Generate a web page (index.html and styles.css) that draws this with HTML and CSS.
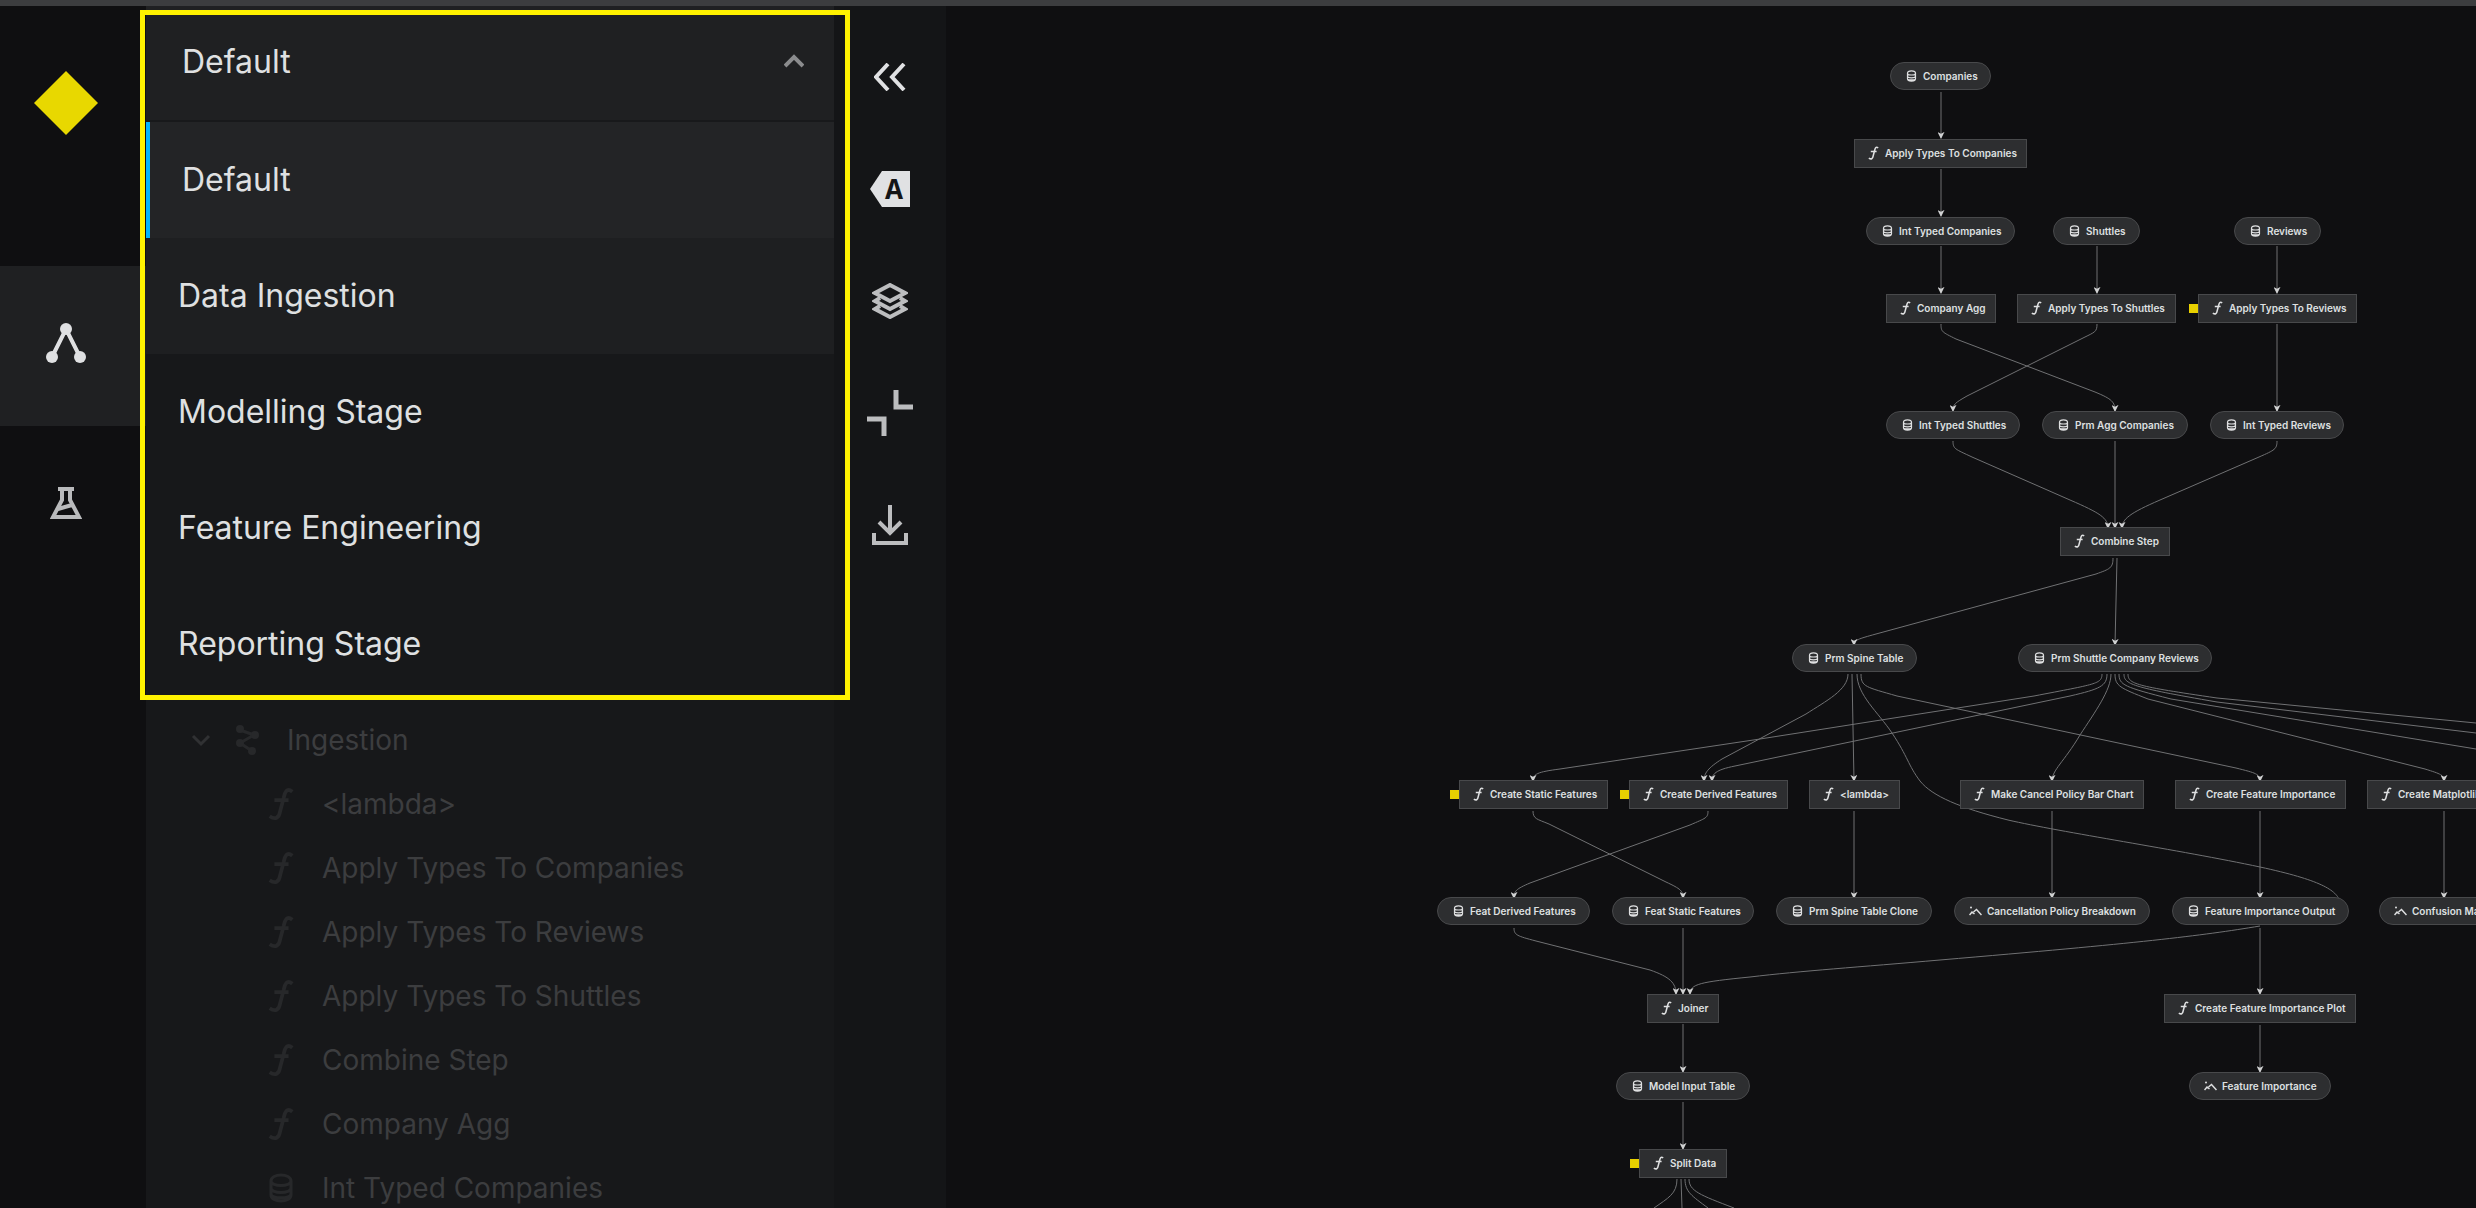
FILE: index.html
```html
<!DOCTYPE html>
<html lang="en">
<head>
<meta charset="utf-8">
<title>Pipeline</title>
<link rel="stylesheet" href="styles.css">
</head>
<body>
<svg class="sprite" aria-hidden="true">
  <symbol id="fn" viewBox="0 0 28 36"><path d="M26 5C20 0 18 6 17 11L13 26C12 33 8 35 2 31M7 14H22" fill="none" stroke="currentColor" stroke-width="4"/></symbol>
  <symbol id="db" viewBox="0 0 24 30"><path d="M2 8C2 0 22 0 22 8V22C22 30 2 30 2 22ZM2 8C2 14 22 14 22 8M2 15C2 21 22 21 22 15M2 21C2 26 22 26 22 21" fill="none" stroke="currentColor" stroke-width="3"/></symbol>
  <symbol id="plot" viewBox="0 0 26 20"><path d="M1 18L6 12L11 16M9 12L15 7L25 18" fill="none" stroke="currentColor" stroke-width="3"/><circle cx="4" cy="3" r="2" fill="currentColor"/></symbol>
</svg>
<div class="topbar"></div>
<div class="app">
  <nav class="nav" aria-label="Primary">
    <a class="nav-logo" href="#" aria-label="Home"><svg width="64" height="64" viewBox="0 0 64 64"><path d="M32 0L64 32L32 64L0 32Z" fill="#e8d800"/></svg></a>
    <a class="nav-item nav-item--active" href="#" aria-label="Flowchart"><svg width="44" height="44" viewBox="0 0 44 44"><path d="M8 36L22 8L36 36" fill="none" stroke="currentColor" stroke-width="4"/><circle cx="22" cy="8" r="6" fill="currentColor"/><circle cx="8" cy="36" r="6" fill="currentColor"/><circle cx="36" cy="36" r="6" fill="currentColor"/></svg></a>
    <a class="nav-item" href="#" aria-label="Experiments"><svg width="32" height="32" viewBox="0 0 32 32"><path d="M8 2H24M12 3V13L3 30H29L20 13V3M8 22L22 18" fill="none" stroke="currentColor" stroke-width="4"/></svg></a>
  </nav>
  <aside class="panel">
    <div class="panel-main">
      <button class="picker" type="button" aria-expanded="true">Default<svg width="20" height="14" viewBox="0 0 20 14"><path d="M1 12L10 3L19 12" fill="none" stroke="currentColor" stroke-width="4"/></svg></button>
      <ul class="options">
        <li><button class="option option--selected" type="button">Default</button></li>
        <li><button class="option option--hover" type="button">Data Ingestion</button></li>
        <li><button class="option" type="button">Modelling Stage</button></li>
        <li><button class="option" type="button">Feature Engineering</button></li>
        <li><button class="option" type="button">Reporting Stage</button></li>
      </ul>
      <ul class="tree">
        <li class="tree-row tree-row--group"><svg class="tree-caret" width="20" height="14" viewBox="0 0 20 14"><path d="M2 3L10 11L18 3" fill="none" stroke="currentColor" stroke-width="3"/></svg><svg class="tree-icon" width="24" height="30" viewBox="0 0 24 30"><path d="M5 5L19 10L5 18L17 26" fill="none" stroke="currentColor" stroke-width="3"/><circle cx="5" cy="4" r="4" fill="currentColor"/><circle cx="20" cy="10" r="4" fill="currentColor"/><circle cx="5" cy="18" r="4" fill="currentColor"/><circle cx="17" cy="26" r="4" fill="currentColor"/></svg>Ingestion</li>
        <li class="tree-row"><svg class="tree-icon"><use href="#fn"/></svg>&lt;lambda&gt;</li>
        <li class="tree-row"><svg class="tree-icon"><use href="#fn"/></svg>Apply Types To Companies</li>
        <li class="tree-row"><svg class="tree-icon"><use href="#fn"/></svg>Apply Types To Reviews</li>
        <li class="tree-row"><svg class="tree-icon"><use href="#fn"/></svg>Apply Types To Shuttles</li>
        <li class="tree-row"><svg class="tree-icon"><use href="#fn"/></svg>Combine Step</li>
        <li class="tree-row"><svg class="tree-icon"><use href="#fn"/></svg>Company Agg</li>
        <li class="tree-row"><svg class="tree-icon tree-icon--db"><use href="#db"/></svg>Int Typed Companies</li>
      </ul>
    </div>
    <div class="rail">
      <button class="tool tool--on" type="button" aria-label="Hide menu"><svg width="32" height="28" viewBox="0 0 32 28"><path d="M14 1L2 14L14 27M30 1L18 14L30 27" fill="none" stroke="currentColor" stroke-width="4"/></svg></button>
      <button class="tool tool--on" type="button" aria-label="Text labels"><svg width="40" height="36" viewBox="0 0 40 36"><path d="M12 0H40V36H12L0 18Z" fill="currentColor"/><text class="tag-letter" x="24" y="28" text-anchor="middle">A</text></svg></button>
      <button class="tool" type="button" aria-label="Layers"><svg width="36" height="36" viewBox="0 0 36 36"><path d="M18 2L33 10L18 18L3 10ZM8 15L3 18L18 26L33 18L28 15M8 23L3 26L18 34L33 26L28 23" fill="none" stroke="currentColor" stroke-width="4"/></svg></button>
      <button class="tool" type="button" aria-label="Collapse pipelines"><svg width="46" height="46" viewBox="0 0 46 46"><path d="M29 0V17H46M0 29H17V46" fill="none" stroke="currentColor" stroke-width="5"/></svg></button>
      <button class="tool" type="button" aria-label="Export"><svg width="36" height="40" viewBox="0 0 36 40"><path d="M18 0V28M7 17L18 28L29 17M2 28V38H34V28" fill="none" stroke="currentColor" stroke-width="4"/></svg></button>
    </div>
  </aside>
  <main class="canvas">
    <svg class="edges" width="1530" height="1202" viewBox="946 6 1530 1202">
      <defs><marker id="arrow" viewBox="0 0 8 8" refX="7" refY="4" markerWidth="7" markerHeight="7" markerUnits="userSpaceOnUse" orient="auto"><path d="M0 0L8 4L0 8L2 4Z" fill="#d0d1d2"/></marker></defs>
      <g class="edge edge--arrow">
        <path d="M1941 92V138"/><path d="M1941 169V216"/><path d="M1941 246V293"/><path d="M2097 246V293"/><path d="M2277 246V293"/><path d="M2277 324V411"/>
        <path d="M1941 324C1941 332 1942 332 1956 339L2095 392C2112 399 2115 402 2115 411"/>
        <path d="M2097 324C2097 332 2095 332 2083 338L1967 396C1955 403 1953 404 1953 411"/>
        <path d="M1953 441C1953 449 1955 449 1972 457L2070 500C2100 513 2108 518 2108 528"/>
        <path d="M2115 441V528"/>
        <path d="M2277 441C2277 449 2275 450 2259 457L2160 500C2130 513 2122 519 2122 528"/>
        <path d="M2113 558C2113 568 2110 569 2096 574L1876 634C1858 639 1854 640 1854 645"/>
        <path d="M2117 558L2115 645"/>
        <path d="M1848 674C1848 690 1826 701 1806 714L1722 759C1708 768 1704 773 1704 781"/>
        <path d="M1852 674L1854 781"/>
        <path d="M1861 674C1861 687 1866 687 1897 696L2236 768C2256 773 2260 774 2260 781"/>
        <path d="M2102 674C2102 684 2096 684 2034 696L1760 739L1560 769C1537 772 1533 774 1533 781"/>
        <path d="M2107 674C2107 686 2100 689 2070 696L1735 766C1715 770 1712 774 1712 781"/>
        <path d="M2111 674C2111 690 2095 712 2080 735C2064 762 2052 770 2052 781"/>
        <path d="M2115 674C2115 686 2120 688 2148 699L2425 769C2441 774 2444 775 2444 781"/>
        <path d="M1533 811C1533 819 1537 819 1549 824L1666 882C1681 889 1683 891 1683 898"/>
        <path d="M1708 811C1708 818 1706 818 1690 825L1530 883C1516 889 1514 891 1514 898"/>
        <path d="M1854 811V898"/><path d="M2052 811V898"/><path d="M2260 811V898"/><path d="M2444 811V898"/>
        <path d="M1514 928C1514 935 1517 936 1536 941L1650 970C1670 977 1676 983 1676 994"/>
        <path d="M1683 928V994"/>
        <path d="M2260 926C2200 936 2140 943 1940 960C1860 967 1800 971 1750 977C1700 982 1690 984 1690 994"/>
        <path d="M2260 928V994"/><path d="M2260 1025V1072"/><path d="M1683 1024V1072"/><path d="M1683 1102V1149"/>
      </g>
      <g class="edge">
        <path d="M1857 674C1857 695 1878 712 1892 733C1908 757 1908 765 1920 781C1932 796 1960 808 2008 820C2060 832 2180 850 2260 867C2320 880 2337 890 2340 902"/>
        <path d="M2119 674C2119 685 2124 687 2171 699L2476 749"/>
        <path d="M2124 674C2124 684 2130 687 2217 702L2476 733"/>
        <path d="M2128 674C2128 684 2135 686 2217 698L2476 723"/>
        <path d="M1677 1179C1677 1194 1668 1198 1654 1208"/><path d="M1681 1179L1682 1208"/>
        <path d="M1685 1179C1685 1192 1692 1196 1708 1208"/><path d="M1689 1179C1689 1191 1700 1195 1734 1208"/>
      </g>
    </svg>
    <div class="node node--data" style="left:944px;top:56px;width:101px"><svg><use href="#db"/></svg>Companies</div>
    <div class="node" style="left:908px;top:133px;width:173px"><svg><use href="#fn"/></svg>Apply Types To Companies</div>
    <div class="node node--data" style="left:920px;top:211px;width:149px"><svg><use href="#db"/></svg>Int Typed Companies</div>
    <div class="node node--data" style="left:1107px;top:211px;width:87px"><svg><use href="#db"/></svg>Shuttles</div>
    <div class="node node--data" style="left:1288px;top:211px;width:87px"><svg><use href="#db"/></svg>Reviews</div>
    <div class="node" style="left:940px;top:288px;width:110px"><svg><use href="#fn"/></svg>Company Agg</div>
    <div class="node" style="left:1071px;top:288px;width:159px"><svg><use href="#fn"/></svg>Apply Types To Shuttles</div>
    <div class="node node--params" style="left:1252px;top:288px;width:159px"><svg><use href="#fn"/></svg>Apply Types To Reviews</div>
    <div class="node node--data" style="left:940px;top:405px;width:134px"><svg><use href="#db"/></svg>Int Typed Shuttles</div>
    <div class="node node--data" style="left:1096px;top:405px;width:146px"><svg><use href="#db"/></svg>Prm Agg Companies</div>
    <div class="node node--data" style="left:1264px;top:405px;width:134px"><svg><use href="#db"/></svg>Int Typed Reviews</div>
    <div class="node" style="left:1114px;top:521px;width:110px"><svg><use href="#fn"/></svg>Combine Step</div>
    <div class="node node--data" style="left:846px;top:638px;width:125px"><svg><use href="#db"/></svg>Prm Spine Table</div>
    <div class="node node--data" style="left:1072px;top:638px;width:194px"><svg><use href="#db"/></svg>Prm Shuttle Company Reviews</div>
    <div class="node node--params" style="left:513px;top:774px;width:149px"><svg><use href="#fn"/></svg>Create Static Features</div>
    <div class="node node--params" style="left:683px;top:774px;width:159px"><svg><use href="#fn"/></svg>Create Derived Features</div>
    <div class="node" style="left:863px;top:774px;width:91px"><svg><use href="#fn"/></svg>&lt;lambda&gt;</div>
    <div class="node" style="left:1014px;top:774px;width:184px"><svg><use href="#fn"/></svg>Make Cancel Policy Bar Chart</div>
    <div class="node" style="left:1229px;top:774px;width:171px"><svg><use href="#fn"/></svg>Create Feature Importance</div>
    <div class="node" style="left:1421px;top:774px;width:155px"><svg><use href="#fn"/></svg>Create Matplotlib Chart</div>
    <div class="node node--data" style="left:491px;top:891px;width:153px"><svg><use href="#db"/></svg>Feat Derived Features</div>
    <div class="node node--data" style="left:666px;top:891px;width:142px"><svg><use href="#db"/></svg>Feat Static Features</div>
    <div class="node node--data" style="left:830px;top:891px;width:156px"><svg><use href="#db"/></svg>Prm Spine Table Clone</div>
    <div class="node node--data node--plot" style="left:1008px;top:891px;width:196px"><svg><use href="#plot"/></svg>Cancellation Policy Breakdown</div>
    <div class="node node--data" style="left:1226px;top:891px;width:177px"><svg><use href="#db"/></svg>Feature Importance Output</div>
    <div class="node node--data node--plot" style="left:1433px;top:891px;width:130px"><svg><use href="#plot"/></svg>Confusion Matrix</div>
    <div class="node" style="left:701px;top:988px;width:72px"><svg><use href="#fn"/></svg>Joiner</div>
    <div class="node" style="left:1218px;top:988px;width:192px"><svg><use href="#fn"/></svg>Create Feature Importance Plot</div>
    <div class="node node--data" style="left:670px;top:1066px;width:134px"><svg><use href="#db"/></svg>Model Input Table</div>
    <div class="node node--data node--plot" style="left:1243px;top:1066px;width:142px"><svg><use href="#plot"/></svg>Feature Importance</div>
    <div class="node node--params" style="left:693px;top:1143px;width:88px"><svg><use href="#fn"/></svg>Split Data</div>
  </main>
  <div class="highlight"></div>
</div>
</body>
</html>
```
FILE: styles.css
```css
* { box-sizing: border-box; }
body {
  margin: 0;
  height: 100vh;
  overflow: hidden;
  display: flex;
  flex-direction: column;
  background: #0f0f11;
  color: #dfe0e1;
  font-family: Inter, "Liberation Sans", sans-serif;
  font-optical-sizing: none;
}
ul { list-style: none; margin: 0; padding: 0; }
button { border: 0; margin: 0; padding: 0; background: none; color: inherit; font: inherit; text-align: left; }
.sprite { position: absolute; width: 0; height: 0; }
.topbar { flex: none; height: 6px; background: #3c3d3f; }
.app { flex: 1; min-height: 0; display: flex; }

.nav { flex: none; width: 146px; background: #0f0f11; }
.nav-logo, .nav-item { display: flex; align-items: center; justify-content: center; padding-right: 14px; }
.nav-logo { height: 260px; padding-bottom: 66px; }
.nav-item { height: 160px; padding-bottom: 6px; color: #b9babc; }
.nav-item--active { background: #1f2022; color: #dfe0e2; }

.panel { flex: none; display: flex; background: #17181a; overflow: hidden; }
.panel-main { width: 688px; }
.picker {
  display: flex;
  align-items: center;
  justify-content: space-between;
  width: 100%;
  height: 116px;
  padding: 0 30px 4px 36px;
  border-bottom: 2px solid #18191b;
  background: #1f2022;
  font-size: 32px;
}
.picker svg { color: #8b8c8e; }
.option { display: block; width: 100%; height: 116px; padding: 0 32px 2px; background: #17181a; font-size: 32px; }
.option--selected { background: #232426; border-left: 4px solid #00b4ff; }
.option--hover { background: #1e1f21; }

.tree { padding-top: 6px; }
.tree-row { display: flex; align-items: center; height: 64px; padding-left: 121px; gap: 27px; color: #3c3d3f; font-size: 28px; white-space: nowrap; }
.tree-row--group { padding-left: 45px; gap: 24px; }
.tree-row--group .tree-icon { width: 24px; height: 30px; margin-right: 4px; }
.tree-caret { color: #303133; }
.tree-icon { flex: none; width: 28px; height: 34px; color: #27282a; }
.tree-icon--db { height: 30px; }

.rail { width: 112px; padding-top: 15px; background: #141517; }
.tool { display: flex; align-items: center; justify-content: center; width: 112px; height: 112px; color: #bcbdbf; }
.tool--on { color: #e0e1e3; }
.tag-letter { font-family: "Liberation Mono", monospace; font-size: 30px; font-weight: 700; fill: #141517; }

.canvas { position: relative; flex: 1; min-width: 0; overflow: hidden; }
.edges { display: block; }
.edge { fill: none; stroke: #707173; stroke-width: 1; }
.edge--arrow path { marker-end: url(#arrow); }
.node {
  position: absolute;
  display: flex;
  align-items: center;
  gap: 6px;
  height: 29px;
  padding: 0 0 1px 13px;
  border: 1px solid #48494b;
  background: #2d2e30;
  font-size: 10px;
  font-weight: 600;
  line-height: 14px;
  white-space: nowrap;
}
.node svg { flex: none; width: 11px; height: 14px; }
.node--data { height: 28px; padding: 0 0 0 15px; border-radius: 14px; }
.node--data svg { height: 12px; }
.node--plot { padding-left: 14px; gap: 5px; }
.node--plot svg { width: 13px; height: 10px; }
.node--params::before { content: ""; position: absolute; left: -10px; top: 9px; width: 9px; height: 9px; background: #e8d000; }

.highlight { position: absolute; left: 140px; top: 10px; width: 710px; height: 690px; border: 5px solid #fff200; pointer-events: none; }
```
